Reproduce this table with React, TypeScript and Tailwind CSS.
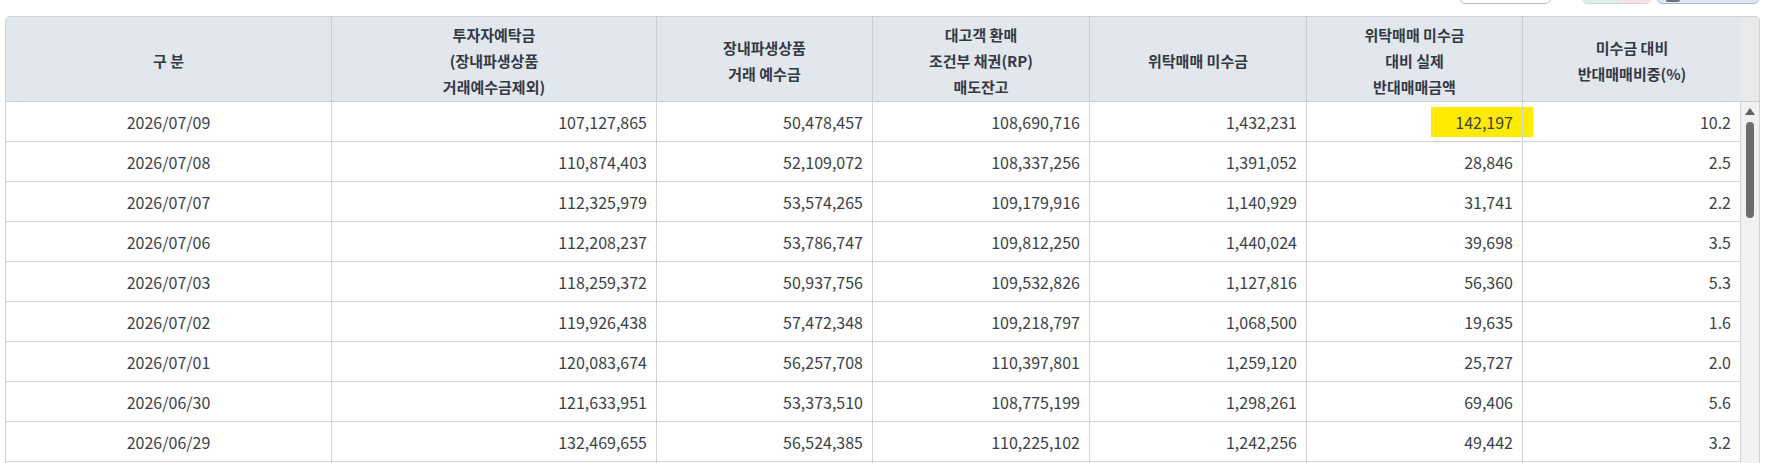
import React from "react";

const rows: string[][] = [
  ["2026/07/09", "107,127,865", "50,478,457", "108,690,716", "1,432,231", "142,197", "10.2"],
  ["2026/07/08", "110,874,403", "52,109,072", "108,337,256", "1,391,052", "28,846", "2.5"],
  ["2026/07/07", "112,325,979", "53,574,265", "109,179,916", "1,140,929", "31,741", "2.2"],
  ["2026/07/06", "112,208,237", "53,786,747", "109,812,250", "1,440,024", "39,698", "3.5"],
  ["2026/07/03", "118,259,372", "50,937,756", "109,532,826", "1,127,816", "56,360", "5.3"],
  ["2026/07/02", "119,926,438", "57,472,348", "109,218,797", "1,068,500", "19,635", "1.6"],
  ["2026/07/01", "120,083,674", "56,257,708", "110,397,801", "1,259,120", "25,727", "2.0"],
  ["2026/06/30", "121,633,951", "53,373,510", "108,775,199", "1,298,261", "69,406", "5.6"],
  ["2026/06/29", "132,469,655", "56,524,385", "110,225,102", "1,242,256", "49,442", "3.2"],
  ["", "", "", "", "", "", ""],
];

const headers: string[][] = [
  ["구 분"],
  ["투자자예탁금", "(장내파생상품", "거래예수금제외)"],
  ["장내파생상품", "거래 예수금"],
  ["대고객 환매", "조건부 채권(RP)", "매도잔고"],
  ["위탁매매 미수금"],
  ["위탁매매 미수금", "대비 실제", "반대매매금액"],
  ["미수금 대비", "반대매매비중(%)"],
];

const grid = "grid grid-cols-[326px_325px_216px_217px_217px_216px_218px]";

export default function App() {
  return (
    <div
      className="w-[1767px] h-[463px] overflow-hidden bg-white"
      style={{ fontFamily: '"Noto Sans CJK KR", "Noto Sans", sans-serif' }}
    >
      {/* top toolbar (mostly scrolled off) */}
      <div className="flex h-[16px] justify-end items-start pr-[8px]">
        <div className="-mt-[26px] h-[30px] w-[91px] rounded-[5px] border border-[#b9bcc2] bg-white" />
        <div className="-mt-[26px] ml-[31px] flex h-[30px] w-[69px] overflow-hidden rounded-[5px] border border-[#d3d6dc]">
          <div className="flex-1 bg-[#d8f3ea]" />
          <div className="flex-1 bg-[#f6e0e1]" />
        </div>
        <div className="-mt-[26px] ml-[6px] flex h-[30px] w-[102px] items-end rounded-[5px] border border-[#aeb9d4] bg-[#dfe6f6] pb-[1px] pl-[8px]">
          <div className="h-[16px] w-[14px] rounded-[2px] bg-[#6e737c]" />
        </div>
      </div>

      {/* table */}
      <div className="ml-[5px] w-[1755px] rounded-t-[4px] border border-[#cdd1d8] text-[#3b3f47]">
        {/* header */}
        <div className="flex">
          <div className={`${grid} h-[85px] border-b border-[#c9cdd4] bg-[#e2e6ed]`}>
            {headers.map((lines, i) => (
              <div
                key={i}
                className={`flex flex-col items-center justify-center pt-[4px] text-[15px] font-semibold leading-[26px] text-[#343a45] ${
                  i < 6 ? "border-r border-[#c9cdd4]" : ""
                }`}
              >
                {lines.map((l, j) => (
                  <span key={j}>{l}</span>
                ))}
              </div>
            ))}
          </div>
          <div className="h-[85px] w-[18px] border-b border-[#c9cdd4] bg-[#e9e9ea]" />
        </div>

        {/* body */}
        <div className="flex">
          <div className="flex flex-col">
            {rows.map((r, ri) => (
              <div key={ri} className={`${grid} h-[40px] border-b border-[#d2d4d8]`}>
                {r.map((c, ci) => (
                  <div
                    key={ci}
                    className={`relative flex items-center border-r border-[#d2d4d8] text-[16px] ${
                      ci === 0 ? "justify-center" : "justify-end pr-[9px]"
                    }`}
                  >
                    {ri === 0 && ci === 5 && (
                      <div className="absolute right-0 top-[5px] h-[30px] w-[91px] bg-[#ffeb00]" />
                    )}
                    {ri === 0 && ci === 6 && (
                      <div className="absolute left-0 top-[5px] h-[30px] w-[10px] bg-[#ffeb00]" />
                    )}
                    {c && <span className="relative">{c}</span>}
                  </div>
                ))}
              </div>
            ))}
          </div>
          {/* scrollbar */}
          <div className="flex w-[18px] flex-col items-center bg-[#f1f1f1] pt-[6px]">
            <svg width="10" height="7" viewBox="0 0 10 7">
              <path d="M5 0 L10 7 L0 7 Z" fill="#606060" />
            </svg>
            <div className="mt-[7px] h-[96px] w-[8px] rounded-full bg-[#6d6d6d]" />
          </div>
        </div>
      </div>
    </div>
  );
}
